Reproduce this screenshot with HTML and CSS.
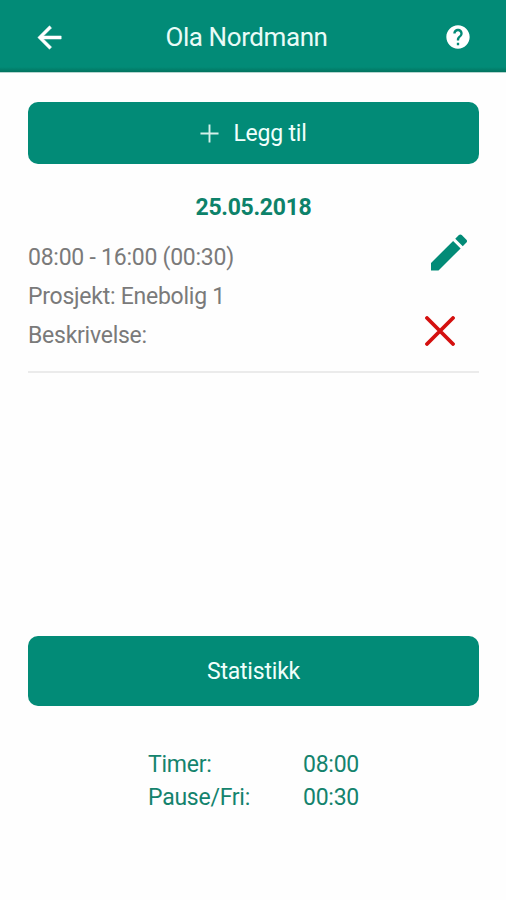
FILE: index.html
```
<!DOCTYPE html>
<html lang="no">
<head>
    <meta charset="UTF-8">
    <meta name="viewport" content="width=device-width, initial-scale=1.0">
    <title>Ola Nordmann</title>
    <link rel="stylesheet" href="styles.css">
</head>
<body>
    <header class="topbar">
        <a class="back" href="#" aria-label="Tilbake">
            <svg viewBox="0 0 24 24"><path d="M20 11H7.83l5.59-5.59L12 4l-8 8 8 8 1.41-1.41L7.83 13H20v-2z"/></svg>
        </a>
        <h1 class="title">Ola Nordmann</h1>
        <a class="help" href="#" aria-label="Hjelp">
            <svg viewBox="0 0 24 24"><path d="M12 2C6.48 2 2 6.48 2 12s4.48 10 10 10 10-4.48 10-10S17.52 2 12 2zm1 17h-2v-2h2v2zm2.07-7.75l-.9.92C13.45 12.9 13 13.5 13 15h-2v-.5c0-1.1.45-2.1 1.17-2.83l1.24-1.26c.37-.36.59-.86.59-1.41 0-1.1-.9-2-2-2s-2 .9-2 2H8c0-2.21 1.79-4 4-4s4 1.79 4 4c0 .88-.36 1.68-.93 2.25z"/></svg>
        </a>
    </header>

    <main class="content">
        <button class="btn btn-add">
            <svg class="plus" viewBox="0 0 20 20"><path d="M10 0.5v19M0.5 10h19"/></svg>
            <span>Legg til</span>
        </button>

        <h2 class="date">25.05.2018</h2>

        <section class="entry">
            <div class="entry-text">
                <p class="time">08:00 - 16:00 (00:30)</p>
                <p class="project">Prosjekt: Enebolig 1</p>
                <p class="description">Beskrivelse:</p>
            </div>
            <div class="entry-actions">
                <svg class="edit" viewBox="3 3 18 18"><path d="M3 17.25V21h3.75L17.81 9.94l-3.75-3.75L3 17.25zM20.71 7.04c.39-.39.39-1.02 0-1.41l-2.34-2.34c-.39-.39-1.02-.39-1.41 0l-1.83 1.83 3.75 3.75 1.83-1.83z"/></svg>
                <svg class="delete" viewBox="0 0 30 30"><path d="M2 2l26 26M28 2L2 28"/></svg>
            </div>
        </section>

        <button class="btn btn-stats">Statistikk</button>

        <dl class="totals">
            <dt class="hours">Timer:</dt>
            <dd>08:00</dd>
            <dt class="pause">Pause/Fri:</dt>
            <dd>00:30</dd>
        </dl>
    </main>
</body>
</html>
```

FILE: styles.css
```
* {
    box-sizing: border-box;
}
body {
    font-family: Roboto, "Liberation Sans", sans-serif;
    margin: 0;
    height: 900px;
    background-color: #fefefe;
    color: #7a7a7a;
}
h1, h2, p, dl, dd {
    margin: 0;
    font-weight: 400;
}
svg {
    display: block;
}
.topbar {
    display: grid;
    grid-template-columns: 35px 1fr 28px;
    align-items: center;
    height: 73px;
    padding: 1px 34px 0 32px;
    background: linear-gradient(#028b77 67px, #02735f 72px, #b5d5cf 72px);
}
.topbar svg {
    fill: #ffffff;
}
.back svg {
    width: 35px;
    height: 35px;
    stroke: #ffffff;
    stroke-width: 0.4;
}
.help svg {
    width: 28px;
    height: 28px;
}
.title {
    padding-right: 18px;
    text-align: center;
    font-size: 26px;
    letter-spacing: -0.42px;
    color: #e9fbf7;
}
.content {
    padding: 29px 27px 0 28px;
}
.btn {
    display: flex;
    align-items: center;
    justify-content: center;
    width: 100%;
    border: none;
    border-radius: 10px;
    background-color: #028b77;
    color: #f0fffc;
    font-family: inherit;
    font-size: 23px;
    letter-spacing: -0.2px;
    cursor: pointer;
}
.btn-add {
    gap: 14px;
    height: 62px;
}
.plus {
    width: 19px;
    height: 19px;
    stroke: #d5f0ea;
    stroke-width: 2;
}
.date {
    margin-top: 30px;
    line-height: 28px;
    text-align: center;
    font-size: 23px;
    font-weight: 700;
    letter-spacing: -0.3px;
    color: #0d826a;
}
.entry {
    display: flex;
    justify-content: space-between;
    height: 151px;
    padding-top: 16px;
    border-bottom: 2px solid #ebebeb;
}
.entry-text {
    font-size: 23px;
    line-height: 39px;
    letter-spacing: -0.25px;
}
.entry-actions {
    width: 54px;
}
.edit {
    width: 36px;
    height: 37px;
    margin: -4px 0 0 6px;
    fill: #028b77;
}
.delete {
    width: 30px;
    height: 30px;
    margin: 45px 0 0 0;
    fill: none;
    stroke: #d4100f;
    stroke-width: 3.8;
    stroke-linecap: round;
}
.btn-stats {
    height: 70px;
    margin-top: 263px;
}
.totals {
    display: grid;
    grid-template-columns: 155px 60px;
    margin: 42px 0 0 120px;
    font-size: 23px;
    line-height: 33px;
    letter-spacing: -0.25px;
    color: #14836d;
}
```
